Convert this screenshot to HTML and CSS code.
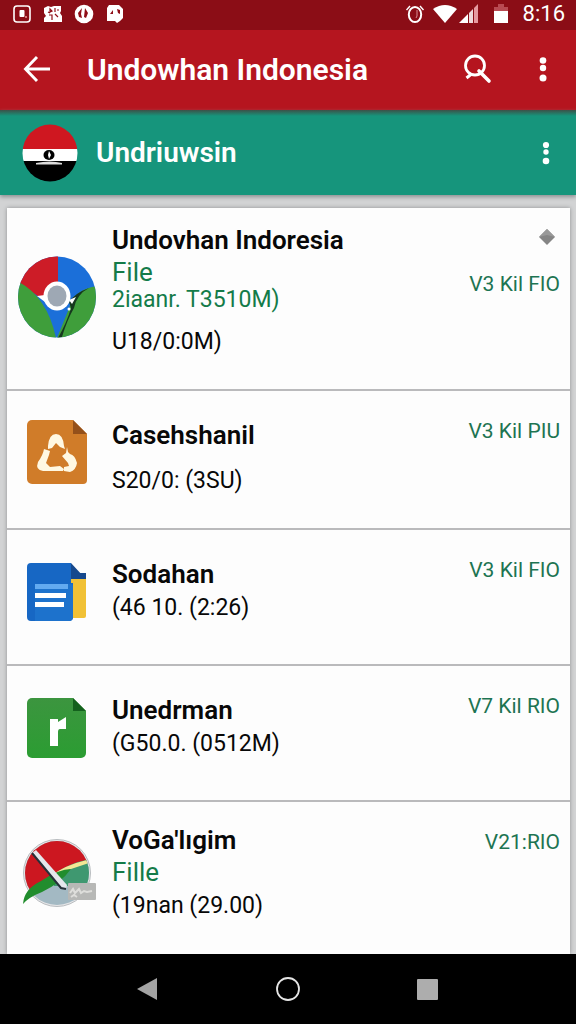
FILE: index.html
```html
<!DOCTYPE html>
<html lang="id">
<head>
<meta charset="utf-8">
<meta name="viewport" content="width=device-width, initial-scale=1">
<title>Undowhan Indonesia</title>
<link rel="stylesheet" href="styles.css">
</head>
<body>
<div class="statusbar">
  <div class="status-group notices">
    <svg width="20" height="20" viewBox="0 0 20 20"><rect x="2" y="2" width="16" height="16" rx="3" fill="none" stroke="#fff" stroke-width="1.6"/><rect x="7.500" y="6" width="5" height="7" rx="1" fill="#fff"/><circle cx="14" cy="13" r="1" fill="#e99"/></svg>
    <svg width="20" height="20" viewBox="0 0 20 20"><path d="M1 4l4-2 3 1 3-1h7v5l-1 2 2 3v6H1v-4l2-2-2-3z" fill="#fff"/><path d="M7 5l2 2-2 1zM6 11h3v5M12 4v4M12 10l3 3M5 8l2 1M14 6h2" stroke="#8f0e17" stroke-width="1.200" fill="none"/></svg>
    <svg width="20" height="20" viewBox="0 0 20 20"><circle cx="10" cy="10" r="9.300" fill="#fff"/><path d="M8 4L4 9l1 4 3 1-1-4zM11 4l3 5-2 5-2-1zM8 14l3 2" fill="#8f0e17"/></svg>
    <svg width="20" height="20" viewBox="0 0 20 20"><path d="M4 1h10l4 4v9l-3 3-3 2-2-2H2V4z" fill="#fff"/><path d="M5 10l3-4v4zM12 5l3 1v4l-2-1z" fill="#8f0e17"/></svg>
  </div>
  <div class="status-group signals">
    <svg width="20" height="20" viewBox="0 0 20 20"><ellipse cx="10" cy="10.500" rx="6.200" ry="7.500" fill="none" stroke="#fff" stroke-width="2"/><path d="M1.500 6L5 2M15 2l3.500 4" stroke="#fff" stroke-width="1.400" fill="none"/><path d="M12 6v6l-1 2" stroke="#d98e94" fill="none"/></svg>
    <svg width="24" height="20" viewBox="0 0 24 20"><path d="M0 5Q12-3 24 5L12 19z" fill="#fff"/></svg>
    <svg width="20" height="20" viewBox="0 0 20 20"><path d="M0 19L9 10v9z" fill="#fff"/><path d="M10 9l4-4v14h-4z" fill="#fff" opacity=".85"/><path d="M15 4l4-4v19h-4z" fill="#e59aa0"/></svg>
    <svg class="battery" width="14" height="20" viewBox="0 0 14 20"><path d="M0 3h4V0h6v3h4v5H0z" fill="#b84a52"/><path d="M0 7h14v12H0z" fill="#fff"/></svg>
    <span class="clock">8:16</span>
  </div>
</div>

<header class="appbar">
  <button class="icon-button" aria-label="Back"><svg width="32" height="32" viewBox="0 0 32 32"><path d="M29 15H5M16 3L4.500 15 16 27" fill="none" stroke="#fff" stroke-width="2.900"/></svg></button>
  <h1 class="appbar-title">Undowhan Indonesia</h1>
  <button class="icon-button" aria-label="Search"><svg width="32" height="32" viewBox="0 0 32 32"><ellipse cx="14" cy="11.500" rx="9.500" ry="9.500" fill="none" stroke="#fff" stroke-width="2.800"/><path d="M18 17l10 10" stroke="#fff" stroke-width="3.600" stroke-linecap="round"/><path d="M10.500 20l-5 4" stroke="#fff" stroke-width="3"/></svg></button>
  <button class="icon-button" aria-label="More options"><svg width="32" height="32" viewBox="0 0 32 32" fill="#fff"><circle cx="16" cy="6.500" r="3.300"/><circle cx="16" cy="14" r="3.200"/><circle cx="16" cy="24" r="3.500"/></svg></button>
</header>

<section class="account">
  <svg class="flag" width="56" height="58" viewBox="0 0 56 58"><clipPath id="flag"><ellipse cx="28" cy="29" rx="27.500" ry="28.500"/></clipPath><g clip-path="url(#flag)"><path d="M0 0h56v25H0z" fill="#cf1720"/><path d="M0 25h56v12H0z" fill="#fff"/><path d="M0 37h56v21H0z"/></g><ellipse cx="27" cy="31" rx="5.500" ry="5"/><path d="M27 27l2 4-2 4-1-4z" fill="#fff"/><path d="M14 39q14-3 26 0v1.500H14z" fill="#ddd"/></svg>
  <h2 class="account-name">Undriuwsin</h2>
  <button class="icon-button" aria-label="Account options"><svg width="32" height="32" viewBox="0 0 32 32" fill="#fff"><circle cx="16" cy="8" r="3.100"/><circle cx="16" cy="15" r="2.700"/><circle cx="16" cy="24" r="3.300"/></svg></button>
</section>

<main class="content">
  <ul class="list">
    <li class="row row-featured">
      <div class="icon icon-low"><svg width="80" height="82" viewBox="0 0 80 82">
        <clipPath id="disc"><ellipse cx="40" cy="41" rx="39" ry="40.500"/></clipPath>
        <g clip-path="url(#disc)"><path d="M0 0h80v82H0z" fill="#1b6fd9"/><path d="M0 0h41v41H22L0 25z" fill="#cd1c27"/><path d="M0 25Q30 40 39 82H0z" fill="#3f9e3b"/><path d="M80 30Q58 33 53 50L40 82h40z" fill="#3f9e3b"/><path d="M72 32Q58 37 52 46l2 6Q50 66 41 82l4-1Q50 64 57 52 60 38 72 32z" fill="#16381e"/></g>
        <path d="M20 40l8-1v7zM52 44l7-3-4 7z" fill="#fff"/><ellipse cx="40" cy="40" rx="13.500" ry="14.500" fill="#fff"/><ellipse cx="40" cy="40" rx="9.500" ry="10.500" fill="#9ea8b4"/><circle cx="52" cy="53" r="1.500" fill="#fff"/></svg></div>
      <div class="body"><h3 class="name">Undovhan Indoresia</h3><p class="kind">File</p><p class="meta meta-green">2iaanr. T3510M)</p><p class="meta meta-apart">U18/0:0M)</p></div>
      <div class="side"><svg class="badge" width="18" height="18" viewBox="0 0 18 18"><path d="M9 1l8 8-8 8-8-8z" fill="#858585"/><path d="M9 1L1 9l8-2 8 2z" fill="#999"/></svg><span class="size">V3 Kil FIO</span></div>
    </li>
    <li class="row row-apart">
      <div class="icon"><svg width="60" height="66" viewBox="0 0 60 66"><path d="M5 1h41l14 14v46a4 4 0 0 1-4 4H5a5 5 0 0 1-5-5V6a5 5 0 0 1 5-5z" fill="#d07c29"/><path d="M46 1l14 14H46z" fill="#94501a"/><path d="M21 27Q22 15 29 15T37 27l1 3-5-2-4-4-4 5-4 1zM17 30l6 2-1 4-3 8 4 4 10-1 4 3-1 2-20 0q-8-1-5-9 5-7 6-13zM40 28l-1 6-4 3 6 7 1 3-5 1 0 4 6 1q6-2 7-9-2-8-7-9l-2-2z" fill="#fff8e2"/></svg></div>
      <div class="body"><h3 class="name">Casehshanil</h3><p class="meta meta-apart">S20/0: (3SU)</p></div>
      <div class="side"><span class="size">V3 Kil PIU</span></div>
    </li>
    <li class="row">
      <div class="icon icon-nudge"><svg width="60" height="60" viewBox="0 0 60 60"><path d="M40 14h19v40a2 2 0 0 1-2 2H40z" fill="#f1c136"/><path d="M44 11h15v6H44zM44 1l12 13H44z" fill="#16498d"/><path d="M4 1h40v20h2v34a4 4 0 0 1-4 4H4a4 4 0 0 1-4-4V5a4 4 0 0 1 4-4z" fill="#1767c4"/><path d="M8 22h36q2 0 2 2v31a4 4 0 0 1-4 4H8z" fill="#1d72cc"/><path d="M8 22h33v5H8z" fill="#63aaf0"/><path d="M8 31h31v5H8zM8 40h29v5H8z" fill="#fff"/></svg></div>
      <div class="body"><h3 class="name">Sodahan</h3><p class="meta meta-close">(46 10. (2:26)</p></div>
      <div class="side"><span class="size">V3 Kil FIO</span></div>
    </li>
    <li class="row">
      <div class="icon icon-nudge"><svg width="60" height="60" viewBox="0 1 60 60"><defs><linearGradient id="leaf" x2="0" y2="1"><stop stop-color="#3c953f"/><stop offset="1" stop-color="#2b9d32"/></linearGradient></defs><path d="M5 1h41l13 13v42a5 5 0 0 1-5 5H5a5 5 0 0 1-5-5V6a5 5 0 0 1 5-5z" fill="url(#leaf)"/><path d="M46 1l13 13H46z" fill="#14611d"/><path d="M23 22h8v3l8-5v12h-6q-2 0-2 3v14h-8z" fill="#fff"/></svg></div>
      <div class="body"><h3 class="name">Unedrman</h3><p class="meta meta-close">(G50.0. (0512M)</p></div>
      <div class="side"><span class="size">V7 Kil RIO</span></div>
    </li>
    <li class="row row-last">
      <div class="icon icon-mid"><svg width="80" height="70" viewBox="0 0 80 70">
        <clipPath id="ball"><circle cx="40" cy="35" r="32"/></clipPath><circle cx="40" cy="35" r="33.500" fill="#e6e6e8" stroke="#b9bdc0"/>
        <g clip-path="url(#ball)"><path d="M0 0h80v70H0z" fill="#a3b9c3"/><path d="M0 0h80v24Q38 25 8 62H0z" fill="#cc1720"/><path d="M80 20Q55 23 37 36v12h43z" fill="#3f9870"/><path d="M70 22Q48 27 34 38l14-5 24-8z" fill="#f4e795"/></g>
        <path d="M6 66Q7 51 24 43q18-12 30-12Q44 45 25 54 12 59 6 66z" fill="#218d2d"/><path d="M15 15l4-3 31 35-1 4-5-1z" fill="#e5e7ec"/><path d="M15 15l29 35 5 1" fill="none" stroke="#273039" stroke-width="2"/><rect x="51" y="45" width="28" height="17" rx="1" fill="#b7b8b6"/><path d="M53 55l3-4 2 4 4-4 2 4 3-2 3 1 5-1M54 59l3-2 3 2" fill="none" stroke="#dededb" stroke-width="2"/></svg></div>
      <div class="body"><h3 class="name">VoGa'lıgim</h3><p class="kind">Fille</p><p class="meta meta-close">(19nan (29.00)</p></div>
      <div class="side"><span class="size">V21:RIO</span></div>
    </li>
  </ul>
</main>

<nav class="navbar" aria-label="System">
  <button class="nav-button" aria-label="Back"><svg width="24" height="24" viewBox="0 0 24 24"><path d="M1 12L21 1v22z" fill="#a3a3a3"/></svg></button>
  <button class="nav-button" aria-label="Home"><svg width="24" height="24" viewBox="0 0 24 24"><circle cx="12" cy="12" r="11" fill="none" stroke="#e5e5e5" stroke-width="1.800"/></svg></button>
  <button class="nav-button" aria-label="Recent apps"><svg width="24" height="24" viewBox="0 0 24 24"><rect x="1" y="2" width="21" height="21" rx="1" fill="#adadad"/></svg></button>
</nav>
</body>
</html>
```
FILE: styles.css
```css
* { box-sizing: border-box; margin: 0; padding: 0; }
body {
  display: flex;
  flex-direction: column;
  min-height: 100vh;
  background: #d2d3d4;
  color: #080808;
  font-family: Roboto, "Liberation Sans", sans-serif;
}
svg { display: block; flex: none; }
button { border: 0; background: none; }

.statusbar {
  display: flex;
  justify-content: space-between;
  align-items: center;
  height: 30px;
  padding: 0 11px 3px 12px;
  background: #8b0d16;
  color: #fff;
}
.status-group { display: flex; align-items: center; }
.notices { gap: 11px; }
.signals { gap: 2px; }
.signals svg:first-child { margin-right: 6px; }
.battery { margin: 0 13px; }
.clock { font-size: 22px; line-height: 24px; }

.appbar, .account { display: flex; align-items: center; color: #fff; }
.appbar {
  gap: 34px;
  height: 80px;
  padding: 0 17px 0 21px;
  background: #b5151f;
}
.appbar-title { flex: 1; font-size: 30px; line-height: 36px; font-weight: 600; white-space: nowrap; }
.account {
  gap: 18px;
  height: 85px;
  padding: 0 14px 0 22px;
  background: linear-gradient(#3c5148, #16957c 6px);
  box-shadow: 0 2px 4px #8d9093;
}
.account-name { flex: 1; font-size: 28px; line-height: 36px; font-weight: 600; }

.content { display: flex; flex: 1; padding: 13px 6px 0 7px; }
.list { flex: 1; list-style: none; background: #fdfdfd; box-shadow: 0 0 4px #8e8f91; }
.row {
  display: flex;
  align-items: flex-start;
  gap: 15px;
  padding: 28px 10px 42px;
  border-bottom: 2px solid #bababc;
}
.row-featured { padding-top: 16px; padding-bottom: 35px; }
.row-apart { padding-bottom: 35px; }
.row-last { padding-top: 22px; padding-bottom: 24px; border: 0; }
.icon { display: flex; justify-content: center; width: 80px; flex: none; }
.icon-low { padding-top: 32px; }
.icon-mid { padding-top: 14px; }
.icon-nudge { padding-top: 4px; }
.body { flex: 1; min-width: 0; white-space: nowrap; }
.name { font-size: 26px; line-height: 32px; font-weight: 600; }
.kind { font-size: 26px; line-height: 32px; color: #147b49; }
.meta { font-size: 23px; line-height: 24px; }
.meta-green { color: #147b49; }
.meta-apart { margin-top: 18px; }
.meta-close { margin-top: 6px; }
.side { display: flex; flex-direction: column; align-items: flex-end; flex: none; }
.badge { margin: 4px 4px 26px 0; }
.size { font-size: 21px; line-height: 24px; color: #1d7452; }
.row-last .size { margin-top: 6px; }

.navbar {
  display: flex;
  justify-content: center;
  align-items: center;
  gap: 116px;
  height: 70px;
  background: #000;
}
```
